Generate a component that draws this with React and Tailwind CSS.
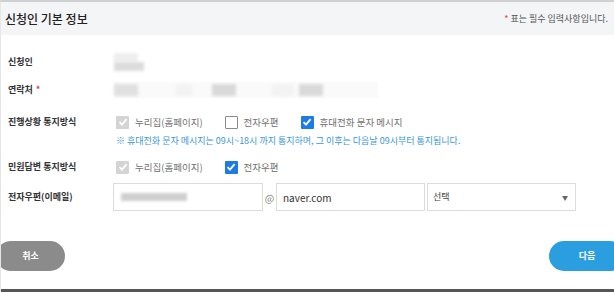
import React from 'react';

const font = { fontFamily: '"Noto Sans CJK KR", "Noto Sans", sans-serif' };

const Check = ({ variant }) => {
  if (variant === 'empty') {
    return <span className="w-[13px] h-[13px] border border-[#8a8a8a] bg-white rounded-[1px] shrink-0" />;
  }
  const bg = variant === 'blue' ? 'bg-[#1e7be6]' : 'bg-[#d4d4d4]';
  return (
    <span className={`w-[13px] h-[13px] ${bg} rounded-[1px] flex items-center justify-center shrink-0`}>
      <svg width="10" height="10" viewBox="0 0 10 10">
        <polyline points="1.5,5.2 4,7.6 8.6,2.2" fill="none" stroke="white" strokeWidth="1.8" />
      </svg>
    </span>
  );
};

const Option = ({ variant, label }) => (
  <label className="flex items-center gap-[6px] text-[9.5px] text-[#707070]">
    <Check variant={variant} />
    <span>{label}</span>
  </label>
);

const Row = ({ label, required, className = '', children }) => (
  <div className={`flex items-center ${className}`}>
    <div className="w-[113px] pl-[7px] text-[9px] font-bold text-[#333] shrink-0">
      {label}
      {required && <span className="text-[#e0443a] ml-[3px]">*</span>}
    </div>
    <div className="flex items-center flex-1">{children}</div>
  </div>
);

const Blur = ({ className }) => <div className={`blur-[1.5px] ${className}`} />;

export default function App() {
  return (
    <div className="w-[614px] h-[292px] overflow-hidden bg-white flex flex-col border-t-2 border-[#cfd0d2] border-l border-l-[#e6e6e6]" style={font}>
      <div className="h-[33px] bg-[#f4f5f7] flex items-center justify-between pl-[4px] pr-[6px] shrink-0">
        <h2 className="text-[12px] text-[#222] font-medium">신청인 기본 정보</h2>
        <p className="text-[9px] text-[#555]"><span className="text-[#e0443a]">*</span> 표는 필수 입력사항입니다.</p>
      </div>

      <Row label="신청인" className="h-[28px] mt-[13px]">
        <div className="flex flex-col">
          <Blur className="w-[24px] h-[9px] bg-[#eeeeee]" />
          <Blur className="w-[30px] h-[9px] bg-[#dcdcdc]" />
        </div>
      </Row>

      <Row label="연락처" required className="h-[28px]">
        <div className="w-[264px] h-[16px] bg-[#fafafa] flex items-center">
          <Blur className="w-[24px] h-[12px] bg-[#e0e0e0]" />
          <Blur className="w-[16px] h-[12px] bg-[#f3f3f3] ml-[38px]" />
          <Blur className="w-[24px] h-[12px] bg-[#d9d9d9] ml-[20px]" />
          <Blur className="w-[22px] h-[12px] bg-[#f3f3f3] ml-[36px]" />
          <Blur className="w-[24px] h-[12px] bg-[#dadada] ml-[5px]" />
        </div>
      </Row>

      <Row label="진행상황 통지방식" className="h-[20px] mt-[8px]">
        <div className="pl-[2px] flex items-center gap-[22px]">
          <Option variant="gray" label="누리집(홈페이지)" />
          <Option variant="empty" label="전자우편" />
          <Option variant="blue" label="휴대전화 문자 메시지" />
        </div>
      </Row>

      <div className="h-[14px] mt-[2px] pl-[115px] flex items-center text-[9px] text-[#3a97d8] whitespace-nowrap">
        ※ 휴대전화 문자 메시지는 09시~18시 까지 통지하며, 그 이후는 다음날 09시부터 통지됩니다.
      </div>

      <Row label="민원답변 통지방식" className="h-[20px] mt-[9px]">
        <div className="pl-[2px] flex items-center gap-[22px]">
          <Option variant="gray" label="누리집(홈페이지)" />
          <Option variant="blue" label="전자우편" />
        </div>
      </Row>

      <Row label="전자우편(이메일)" className="h-[28px] mt-[6px]">
        <div className="-ml-[1px] w-[150px] h-[28px] border border-[#dcdcdc] flex items-center pl-[7px]">
          <Blur className="w-[66px] h-[8px] bg-[#cfcfcf]" />
        </div>
        <span className="w-[13px] text-center text-[10px] text-[#888]">@</span>
        <input readOnly value="naver.com" className="w-[149px] h-[28px] border border-[#dcdcdc] px-[6px] text-[10px] text-[#333] outline-none" />
        <div className="w-[149px] h-[28px] border border-[#dcdcdc] ml-[2px] flex items-center justify-between pl-[5px] pr-[7px]">
          <span className="text-[9px] text-[#444]">선택</span>
          <span className="text-[6px] text-[#666]">▼</span>
        </div>
      </Row>

      <div className="flex justify-between mt-[30px] h-[30px] shrink-0">
        <button className="-ml-[5px] w-[69px] h-[30px] rounded-full bg-[#8b8b8b] text-white text-[9px] font-bold">취소</button>
        <button className="-mr-[11px] w-[76px] h-[30px] rounded-full bg-[#2b9ee0] text-white text-[9px] font-bold">다음</button>
      </div>

      <div className="mt-auto h-[3px] bg-[#555] shrink-0" />
    </div>
  );
}
